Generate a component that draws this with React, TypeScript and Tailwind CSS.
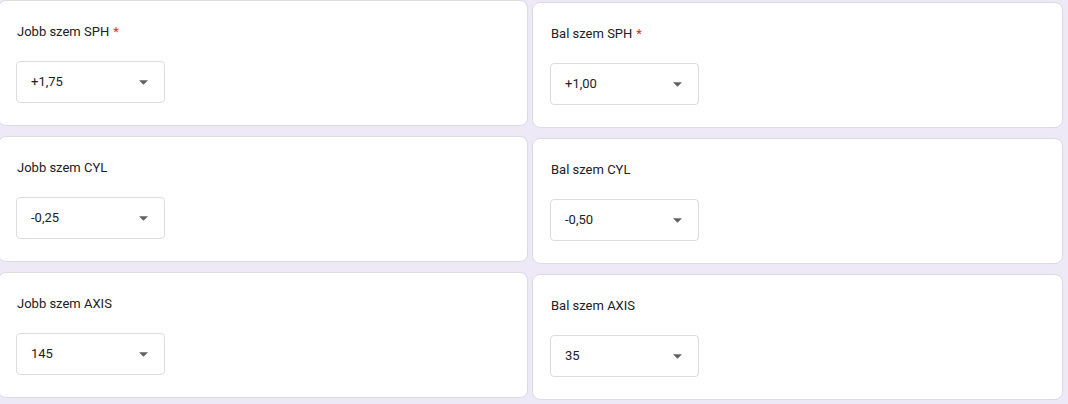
const rows = [
  { left: { label: 'Jobb szem SPH', value: '+1,75', required: true }, right: { label: 'Bal szem SPH', value: '+1,00', required: true } },
  { left: { label: 'Jobb szem CYL', value: '-0,25' }, right: { label: 'Bal szem CYL', value: '-0,50' } },
  { left: { label: 'Jobb szem AXIS', value: '145' }, right: { label: 'Bal szem AXIS', value: '35' } },
];

type Field = { label: string; value: string; required?: boolean };

function Card({ field }: { field: Field }) {
  return (
    <div className="h-[126px] bg-white border border-[#dadce0] rounded-[8px] pl-[18px] pt-[22px]">
      <div className="text-[13px] leading-[18px] text-[#202124]">
        {field.label}
        {field.required && <span className="text-[#d93025] ml-[4px]">*</span>}
      </div>
      <div className="mt-[20px] w-[149px] h-[42px] border border-[#dadce0] rounded-[4px] flex items-center justify-between pl-[14px] pr-[16px] -ml-[1px]">
        <span className="text-[13px] text-[#202124]">{field.value}</span>
        <svg width="9" height="5" viewBox="0 0 10 5">
          <path d="M0 0l5 5 5-5z" fill="#5f6368" />
        </svg>
      </div>
    </div>
  );
}

export default function App() {
  return (
    <div className="w-[1068px] h-[404px] bg-[#ede9f7] overflow-hidden" style={{ fontFamily: 'Roboto, "Liberation Sans", sans-serif' }}>
      <div className="flex gap-[4px] -ml-[2px]">
        <div className="w-[530px] flex flex-col gap-[10px]">
          {rows.map((r) => (
            <Card key={r.left.label} field={r.left} />
          ))}
        </div>
        <div className="w-[531px] flex flex-col gap-[10px] mt-[2px]">
          {rows.map((r) => (
            <Card key={r.right.label} field={r.right} />
          ))}
        </div>
      </div>
    </div>
  );
}
